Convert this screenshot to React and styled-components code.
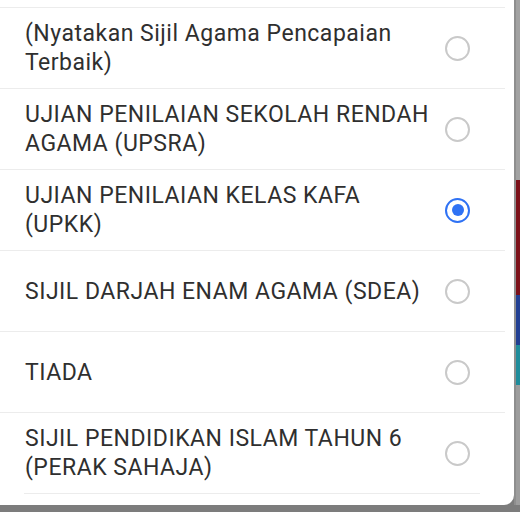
import React, { useState } from 'react';
import styled, { createGlobalStyle } from 'styled-components';

const GlobalStyle = createGlobalStyle`
    html, body {
        margin: 0;
        padding: 0;
        background: #7c7c7c;
    }
`;

const Screen = styled.div`
    width: 520px;
    height: 512px;
    display: flex;
    background: #7c7c7c;
    overflow: hidden;
`;

const Sheet = styled.div`
    width: 514px;
    height: 505px;
    flex-shrink: 0;
    background: #ffffff;
    border-bottom-right-radius: 10px;
    padding-top: 7px;
    box-sizing: border-box;
    font-family: Roboto, "Noto Sans", sans-serif;
`;

const Backdrop = styled.div`
    flex: 1;
    height: 505px;
    display: flex;
    flex-direction: column;
    padding-left: 2px;
    background: #8e8e8e;
`;

const Band = styled.div`
    height: ${p => p.h}px;
    background: ${p => p.c};
    flex-shrink: 0;
`;

const Row = styled.label`
    height: 80px;
    display: flex;
    align-items: center;
    border-top: 1px solid #ececec;
    width: 505px;
    box-sizing: content-box;
    cursor: pointer;
`;

const Text = styled.div`
    width: 412px;
    padding-left: 25px;
    font-size: 23px;
    line-height: 29px;
    color: #2f2f2f;
    letter-spacing: 0.5px;
`;

const Radio = styled.span`
    margin-left: auto;
    margin-right: 35px;
    width: 25px;
    height: 25px;
    box-sizing: border-box;
    border-radius: 50%;
    border: 2.5px solid ${p => (p.checked ? '#2f72f4' : '#c9c9c9')};
    display: flex;
    align-items: center;
    justify-content: center;
    &::after {
        content: '';
        width: 12px;
        height: 12px;
        border-radius: 50%;
        background: #2f72f4;
        display: ${p => (p.checked ? 'block' : 'none')};
    }
`;

const EndLine = styled.div`
    margin: 0 34px 0 24px;
    border-top: 1px solid #ececec;
`;

const options = [
    '(Nyatakan Sijil Agama Pencapaian Terbaik)',
    'UJIAN PENILAIAN SEKOLAH RENDAH AGAMA (UPSRA)',
    'UJIAN PENILAIAN KELAS KAFA (UPKK)',
    'SIJIL DARJAH ENAM AGAMA (SDEA)',
    'TIADA',
    'SIJIL PENDIDIKAN ISLAM TAHUN 6 (PERAK SAHAJA)',
];

export default function App() {
    const [picked, setPicked] = useState(2);
    return (
        <Screen>
            <GlobalStyle />
            <Sheet>
                {options.map((o, i) => (
                    <Row key={o} onClick={() => setPicked(i)}>
                        <Text>{o}</Text>
                        <Radio checked={picked === i} />
                    </Row>
                ))}
                <EndLine />
            </Sheet>
            <Backdrop>
                <Band h={180} c="#a2a2a2" />
                <Band h={115} c="#7b0f18" />
                <Band h={50} c="#213f92" />
                <Band h={40} c="#1f8c9b" />
                <Band h={120} c="#9d9d9d" />
            </Backdrop>
        </Screen>
    );
}
